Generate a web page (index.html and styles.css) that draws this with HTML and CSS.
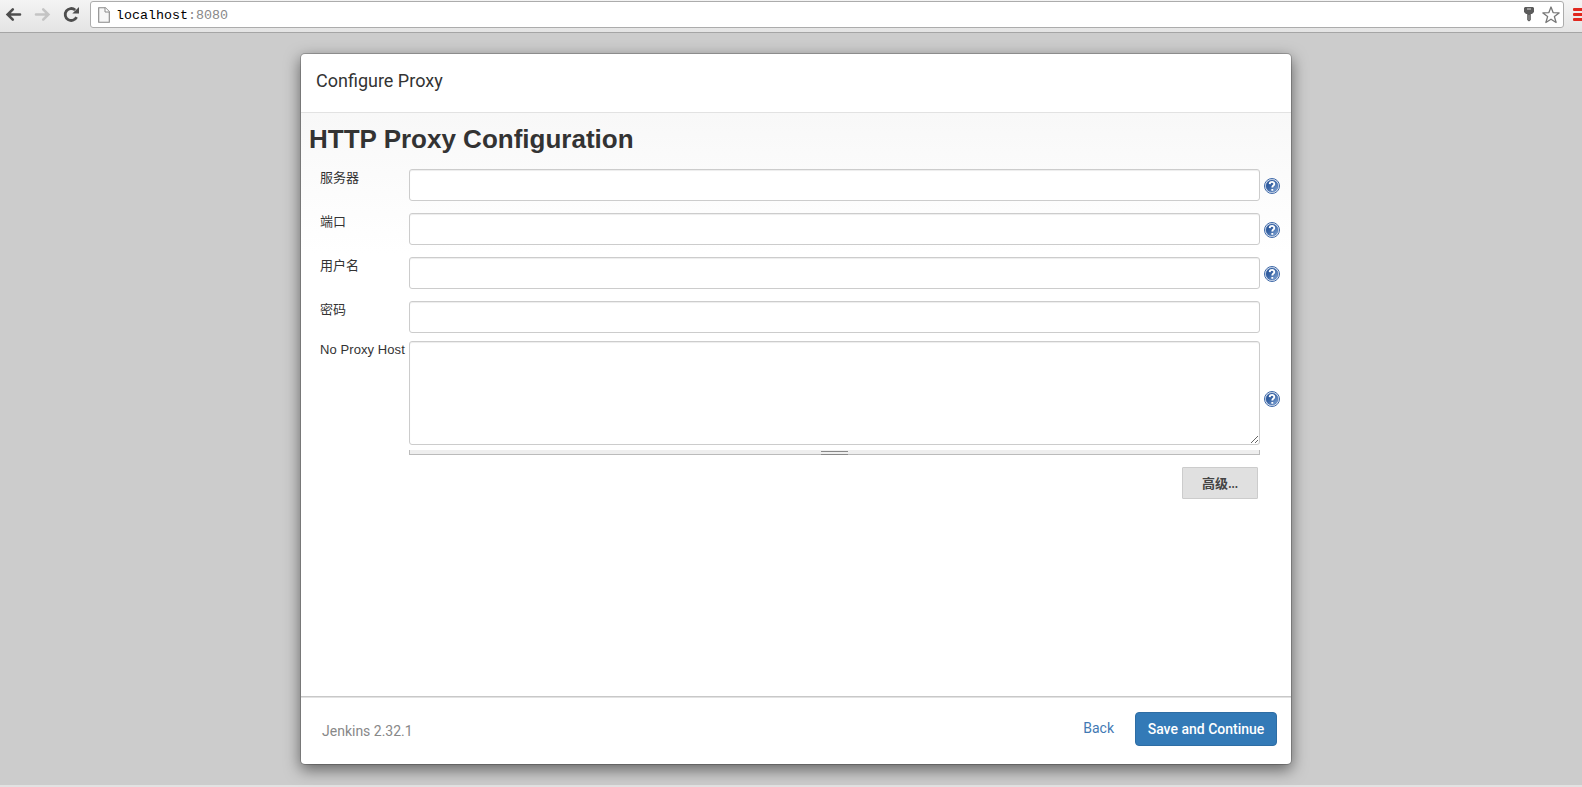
FILE: index.html
```html
<!DOCTYPE html>
<html lang="zh">
<head>
<meta charset="utf-8">
<title>Configure Proxy</title>
<link rel="stylesheet" href="styles.css">
</head>
<body>
<svg class="defs" width="0" height="0" aria-hidden="true">
  <defs>
    <linearGradient id="blue" x1="0" y1="0" x2="1" y2="1"><stop offset="0" stop-color="#234f93"/><stop offset=".45" stop-color="#3864a5"/><stop offset="1" stop-color="#8fb0dc"/></linearGradient>
    <symbol id="help" viewBox="0 0 16 16">
      <circle cx="8" cy="8" r="7.5" fill="#fff" stroke="#3d68a8"/>
      <circle cx="8" cy="8" r="6.1" fill="url(#blue)" stroke="#3c68a9" stroke-width=".6"/>
      <path d="M5.7 6.1C5.8 3.2 10.4 3.2 10.3 6c0 1.6-2 1.6-2 3.4M8.3 11v1.7" fill="none" stroke="#fff" stroke-width="1.9"/>
    </symbol>
  </defs>
</svg>
<header class="toolbar">
  <svg class="nav" width="90" height="30" viewBox="0 0 90 30" fill="none">
    <path d="M20 14.5H8M12.8 9.3 7.6 14.5l5.2 5.2" stroke="#4d4d4d" stroke-width="2.6" stroke-linecap="round"/>
    <path d="M36 14.5h12M43.2 9.3l5.2 5.2-5.2 5.2" stroke="#c4c4c4" stroke-width="2.6" stroke-linecap="round"/>
    <path d="M76.6 17.2A6 6 0 1 1 75.2 10" stroke="#4d4d4d" stroke-width="2.8"/>
    <path d="M79 7v6.5h-6.7z" fill="#4d4d4d"/>
  </svg>
  <div class="omnibox">
    <svg width="12" height="16" viewBox="0 0 12 16"><path d="M.7.7h6.6l4 4v10.6H.7z" fill="#f6f6f6" stroke="#888" stroke-width="1.1"/><path d="M7 .7V5h4.3" fill="#fff" stroke="#888"/></svg>
    <span class="url">localhost<span class="port">:8080</span></span>
    <svg class="key" width="10" height="15" viewBox="0 0 10 15"><path d="M1 0h8l1 1v4L8 7H6.8v6L5 14.5 3.2 13V7H2L0 5V1z" fill="#5b5b5b"/><path d="M3 2h4" stroke="#ddd"/><path d="M5 8v5" stroke="#aaa" stroke-width=".8"/></svg>
    <svg class="star" width="18" height="18" viewBox="0 0 18 18"><path d="M9 1l2.1 5.6 6 .3-4.7 3.7 1.7 5.9L9 13.2l-5.1 3.3 1.7-5.9L.9 6.9l6-.3z" fill="#fff" stroke="#777" stroke-width="1.3" stroke-linejoin="round"/></svg>
  </div>
  <div class="menu"><i></i><i></i><i></i></div>
</header>
<main class="page">
  <section class="dialog">
    <div class="dialog-header">Configure Proxy</div>
    <div class="dialog-body">
      <h1>HTTP Proxy Configuration</h1>
      <div class="row"><label>服务器</label><input type="text"><svg class="help"><use href="#help"/></svg></div>
      <div class="row"><label>端口</label><input type="text"><svg class="help"><use href="#help"/></svg></div>
      <div class="row"><label>用户名</label><input type="text"><svg class="help"><use href="#help"/></svg></div>
      <div class="row last"><label>密码</label><input type="password"></div>
      <div class="row area">
        <label class="latin">No Proxy Host</label>
        <div class="area-box"><textarea></textarea><div class="grip"><span></span></div></div>
        <svg class="help"><use href="#help"/></svg>
      </div>
      <div class="actions"><button class="advanced">高级<span class="dots">...</span></button></div>
    </div>
    <footer class="dialog-footer">
      <span class="version">Jenkins 2.32.1</span>
      <a class="back">Back</a>
      <button class="save">Save and Continue</button>
    </footer>
  </section>
</main>
</body>
</html>
```
FILE: styles.css
```css
* { box-sizing: border-box; }
body { margin: 0; height: 787px; overflow: hidden; display: flex; flex-direction: column; background: #ccc; color: #333; }
.defs { position: absolute; }
.toolbar { height: 33px; flex: none; display: flex; background: linear-gradient(#f4f4f4, #e4e4e4); border-bottom: 1px solid #a5a5a5; overflow: hidden; }
.nav { flex: none; }
.omnibox { width: 1474px; height: 27px; margin-top: 1px; flex: none; display: flex; align-items: center; padding: 0 3px 0 7px; background: #fff; border: 1px solid #acacac; border-radius: 3px; }
.url { flex: 1; margin-left: 6px; padding-top: 2px; font: 13.33px/20px "Liberation Mono", monospace; color: #000; }
.port { color: #888; }
.key { margin-right: 8px; }
.menu { width: 10px; margin: 8px 0 0 9px; flex: none; display: flex; flex-direction: column; gap: 2px; }
.menu i { height: 3px; background: #e0281f; border-radius: 1px 0 0 1px; }
.page { flex: 1; padding: 20px 0 0 300px; border-bottom: 2px solid #e2e2e2; }
.dialog { width: 992px; height: 712px; display: flex; flex-direction: column; background: #fff; background-clip: padding-box; border: 1px solid rgba(0,0,0,.2); border-radius: 5px; box-shadow: 0 5px 15px rgba(0,0,0,.5); }
.dialog-header { height: 59px; flex: none; padding: 14px 15px; border-bottom: 1px solid #e2e2e2; font: 18px/26px Roboto, sans-serif; }
.dialog-body { flex: 1; padding: 8px 10px 0 19px; background: linear-gradient(#f8f8f8, #fff 140px); }
h1 { margin: 0 0 12px -11px; font: bold 26px/36px "Liberation Sans", Arial, sans-serif; }
.row { display: flex; align-items: center; margin-bottom: 12px; }
.row.last { margin-bottom: 8px; }
.row label { width: 89px; flex: none; align-self: flex-start; font: 13px/17px "Liberation Sans", "Noto Sans CJK SC", sans-serif; white-space: nowrap; }
.row .latin { letter-spacing: .08px; }
input, textarea { display: block; margin: 0; background: #fff; border: 1px solid #ccc; border-radius: 3px; box-shadow: inset 0 1px 1px rgba(0,0,0,.075); }
input { width: 851px; height: 32px; }
.help { width: 16px; height: 16px; margin: 2px 0 0 4px; flex: none; }
.area { margin: 0; }
.area-box { width: 851px; }
textarea { width: 851px; height: 104px; resize: both; }
.grip { height: 5px; margin-top: 5px; display: flex; justify-content: center; background: #eee; border: solid #bbb; border-width: 0 1px 1px; }
.grip span { width: 27px; height: 4px; margin-top: 1px; border: solid #888; border-width: 1px 0; }
.actions { display: flex; justify-content: flex-end; padding: 12px 23px 0 0; }
button { margin: 0; padding: 0; }
.advanced { width: 76px; height: 32px; background: #e0e0e0; border: 1px solid #ccc; border-radius: 1px; color: #444; font: bold 13px/20px "Noto Sans CJK SC", sans-serif; }
.dots { font-size: 10px; }
.dialog-footer { height: 68px; flex: none; display: flex; align-items: flex-start; padding: 14px 14px 0 21px; border-top: 1px solid #c8c8c8; box-shadow: inset 0 1px #e2e2e2; padding-top: 15px; font: 14px/20px Roboto, sans-serif; }
.version { flex: 1; margin-top: 9px; color: #888; }
.back { margin: 6px 21px 0 0; color: #4279b3; }
.save { width: 142px; height: 34px; background: #337ab7; border: 1px solid #2e6da4; border-radius: 4px; color: #fff; font: 500 14px/18px Roboto, sans-serif; padding-bottom: 1px; }
```
